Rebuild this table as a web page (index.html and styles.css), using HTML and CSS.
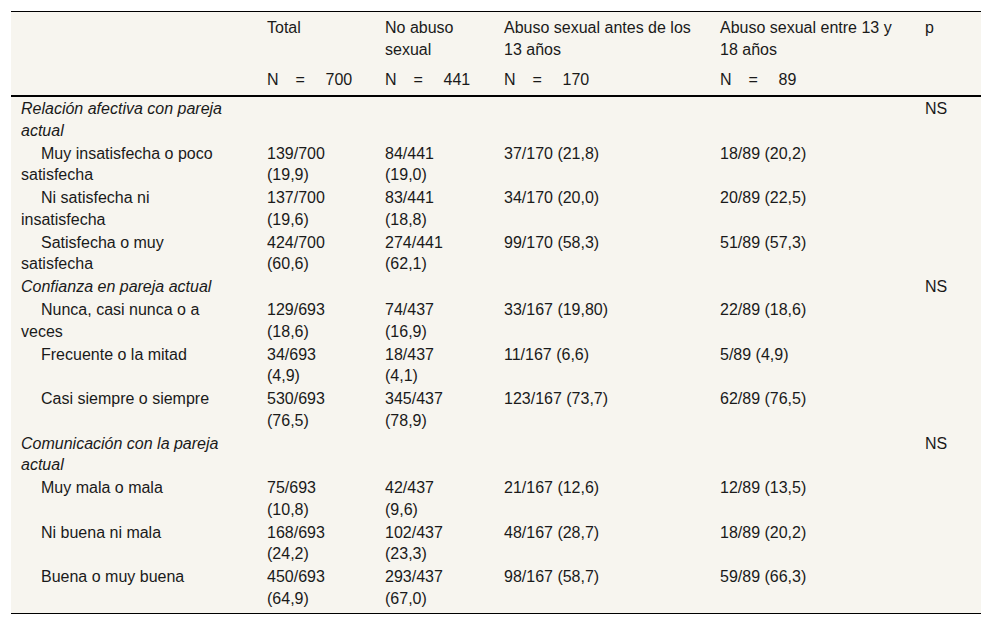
FILE: index.html
```html
<!DOCTYPE html>
<html lang="es">
<head>
<meta charset="utf-8">
<title>Tabla</title>
<link rel="stylesheet" href="styles.css">
</head>
<body>
<div class="wrap">
<table class="data">
<colgroup>
<col class="c1"><col class="c2"><col class="c3"><col class="c4"><col class="c5"><col class="c6">
</colgroup>
<thead>
<tr class="h1">
<th class="k1"></th>
<th class="k2">Total</th>
<th class="k3">No abuso sexual</th>
<th class="k4">Abuso sexual antes de los 13 años</th>
<th class="k5">Abuso sexual entre 13 y 18 años</th>
<th class="k6">p</th>
</tr>
<tr class="h2">
<th class="k1"></th>
<th class="k2"><span class="n">N</span><span class="eq">=</span>700</th>
<th class="k3"><span class="n">N</span><span class="eq">=</span>441</th>
<th class="k4"><span class="n">N</span><span class="eq">=</span>170</th>
<th class="k5"><span class="n">N</span><span class="eq">=</span>89</th>
<th class="k6"></th>
</tr>
</thead>
<tbody>
<tr><td class="k1 grp">Relación afectiva con pareja actual</td><td class="k2"></td><td class="k3"></td><td class="k4"></td><td class="k5"></td><td class="k6">NS</td></tr>
<tr><td class="k1 sub">Muy insatisfecha o poco satisfecha</td><td class="k2">139/700 (19,9)</td><td class="k3">84/441 (19,0)</td><td class="k4">37/170 (21,8)</td><td class="k5">18/89 (20,2)</td><td class="k6"></td></tr>
<tr><td class="k1 sub">Ni satisfecha ni insatisfecha</td><td class="k2">137/700 (19,6)</td><td class="k3">83/441 (18,8)</td><td class="k4">34/170 (20,0)</td><td class="k5">20/89 (22,5)</td><td class="k6"></td></tr>
<tr><td class="k1 sub">Satisfecha o muy satisfecha</td><td class="k2">424/700 (60,6)</td><td class="k3">274/441 (62,1)</td><td class="k4">99/170 (58,3)</td><td class="k5">51/89 (57,3)</td><td class="k6"></td></tr>
<tr><td class="k1 grp">Confianza en pareja actual</td><td class="k2"></td><td class="k3"></td><td class="k4"></td><td class="k5"></td><td class="k6">NS</td></tr>
<tr><td class="k1 sub">Nunca, casi nunca o a veces</td><td class="k2">129/693 (18,6)</td><td class="k3">74/437 (16,9)</td><td class="k4">33/167 (19,80)</td><td class="k5">22/89 (18,6)</td><td class="k6"></td></tr>
<tr><td class="k1 sub">Frecuente o la mitad</td><td class="k2">34/693 (4,9)</td><td class="k3">18/437 (4,1)</td><td class="k4">11/167 (6,6)</td><td class="k5">5/89 (4,9)</td><td class="k6"></td></tr>
<tr><td class="k1 sub">Casi siempre o siempre</td><td class="k2">530/693 (76,5)</td><td class="k3">345/437 (78,9)</td><td class="k4">123/167 (73,7)</td><td class="k5">62/89 (76,5)</td><td class="k6"></td></tr>
<tr><td class="k1 grp">Comunicación con la pareja actual</td><td class="k2"></td><td class="k3"></td><td class="k4"></td><td class="k5"></td><td class="k6">NS</td></tr>
<tr><td class="k1 sub">Muy mala o mala</td><td class="k2">75/693 (10,8)</td><td class="k3">42/437 (9,6)</td><td class="k4">21/167 (12,6)</td><td class="k5">12/89 (13,5)</td><td class="k6"></td></tr>
<tr><td class="k1 sub">Ni buena ni mala</td><td class="k2">168/693 (24,2)</td><td class="k3">102/437 (23,3)</td><td class="k4">48/167 (28,7)</td><td class="k5">18/89 (20,2)</td><td class="k6"></td></tr>
<tr class="last"><td class="k1 sub">Buena o muy buena</td><td class="k2">450/693 (64,9)</td><td class="k3">293/437 (67,0)</td><td class="k4">98/167 (58,7)</td><td class="k5">59/89 (66,3)</td><td class="k6"></td></tr>
</tbody>
</table>
</div>
</body>
</html>
```
FILE: styles.css
```css
html, body {
  margin: 0;
  padding: 0;
  background: #ffffff;
}

.wrap {
  padding: 11px 11px 0 11px;
}

.data {
  width: 970px;
  table-layout: fixed;
  border-collapse: collapse;
  background: #f7f5ef;
  font-family: "Liberation Sans", Arial, sans-serif;
  font-size: 16px;
  line-height: 21.5px;
  color: #1a1a1a;
}

.c1 { width: 246px; }
.c2 { width: 118px; }
.c3 { width: 119px; }
.c4 { width: 216px; }
.c5 { width: 205px; }
.c6 { width: 66px; }

.data th,
.data td {
  text-align: left;
  vertical-align: top;
  font-weight: normal;
  padding-left: 10px;
}

.data .k1 { padding-right: 32px; }
.data .k2 { padding-right: 35px; }
.data .k3 { padding-right: 32px; }
.data .k4 { padding-right: 10px; }
.data .k5 { padding-right: 12px; }
.data .k6 { padding-right: 10px; }

.h1 th {
  border-top: 1px solid #000;
  padding-top: 5px;
  padding-bottom: 4px;
}

.h2 th {
  padding-top: 5px;
  padding-bottom: 4.5px;
  border-bottom: 2px solid #000;
  white-space: nowrap;
}

.n {
  display: inline-block;
  width: 28.5px;
}

.eq {
  display: inline-block;
  width: 30px;
}

.data td {
  padding-top: 1px;
  padding-bottom: 0.5px;
}

.data .grp {
  font-style: italic;
}

.data .sub {
  text-indent: 20px;
}

.last td {
  padding-bottom: 4px;
  border-bottom: 1px solid #000;
}
```
